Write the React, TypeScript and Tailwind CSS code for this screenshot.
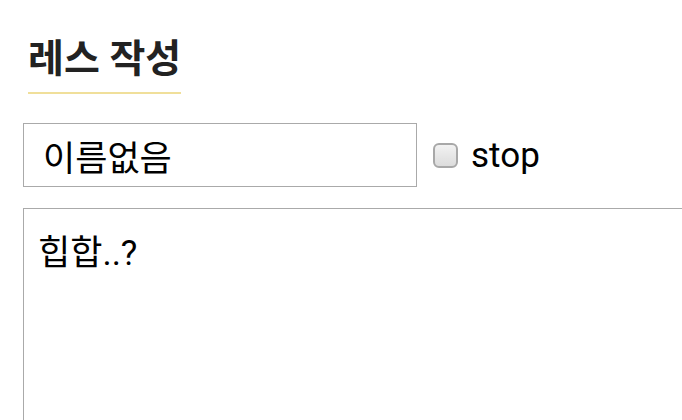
export default function App() {
  return (
    <div
      className="h-[420px] w-full overflow-hidden bg-white pl-[23px] text-black"
      style={{ fontFamily: 'Roboto, "Noto Sans CJK KR", sans-serif' }}
    >
      {/* 제목 */}
      <div className="pt-[35px] pl-[5px]">
        <h2 className="inline-block border-b-2 border-[#f0df9a] pb-[9px] text-[39px] leading-[48px] font-bold text-[#222]">
          레스 작성
        </h2>
      </div>

      {/* 이름 + stop */}
      <div className="mt-[29px] flex items-center">
        <input
          readOnly
          value="이름없음"
          className="h-[64px] w-[394px] border border-[#aaaaaa] pl-[19px] text-[35px] outline-none"
        />
        <label className="ml-[16px] flex items-center">
          <span className="h-[25px] w-[25px] rounded-[6px] border-2 border-[#a8a8a8] bg-gradient-to-b from-[#f2f2f2] to-[#dcdcdc]" />
          <span className="ml-[13px] text-[35px] leading-none">stop</span>
        </label>
      </div>

      {/* 본문 */}
      <textarea
        readOnly
        value="힙합..?"
        className="mt-[21px] block h-[260px] w-[700px] resize-none border border-[#aaaaaa] px-[14px] pt-[25px] text-[35px] leading-[40px] outline-none"
      />
    </div>
  );
}
